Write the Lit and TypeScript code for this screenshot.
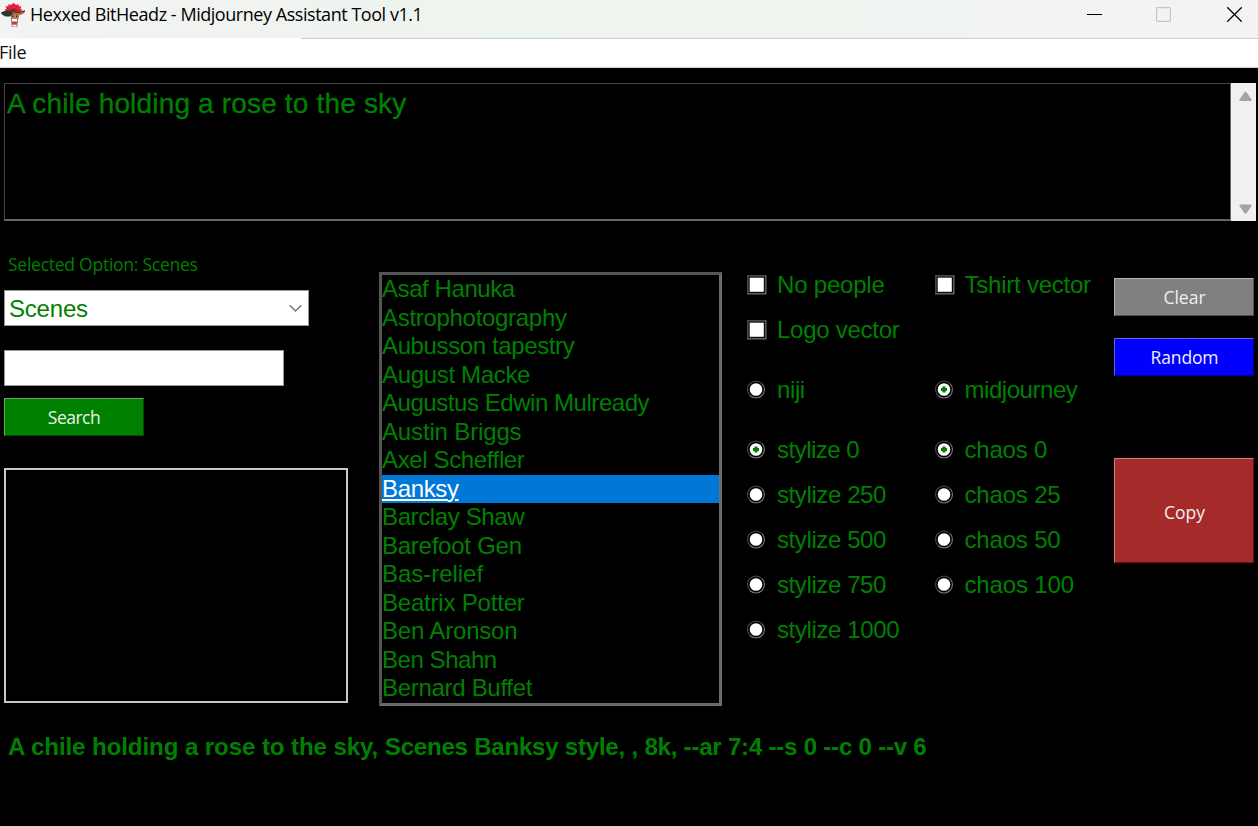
import { LitElement, html, css, svg } from "lit";
import { customElement, property, state } from "lit/decorators.js";
import { classMap } from "lit/directives/class-map.js";

interface Choice {
  text: string;
  col: number;
  row: number;
  on?: boolean;
  spacing: number;
}

const STYLES_LIST: [string, number][] = [
  ["Asaf Hanuka", -0.42],
  ["Astrophotography", -0.3],
  ["Aubusson tapestry", -0.38],
  ["August Macke", -0.33],
  ["Augustus Edwin Mulready", -0.45],
  ["Austin Briggs", -0.15],
  ["Axel Scheffler", -0.37],
  ["Banksy", -0.35],
  ["Barclay Shaw", -0.38],
  ["Barefoot Gen", -0.25],
  ["Bas-relief", -0.03],
  ["Beatrix Potter", -0.2],
  ["Ben Aronson", -0.18],
  ["Ben Shahn", -0.45],
  ["Bernard Buffet", -0.3],
];

const CHECKS: Choice[] = [
  { text: "No people", col: 1, row: 1, spacing: -0.2 },
  { text: "Tshirt vector", col: 2, row: 1, spacing: -0.23 },
  { text: "Logo vector", col: 1, row: 2, spacing: -0.26 },
];

const RADIOS: Choice[] = [
  { text: "niji", col: 1, row: 4, spacing: -0.4 },
  { text: "midjourney", col: 2, row: 4, on: true, spacing: -0.45 },
  { text: "stylize 0", col: 1, row: 6, on: true, spacing: -0.5 },
  { text: "chaos 0", col: 2, row: 6, on: true, spacing: -0.2 },
  { text: "stylize 250", col: 1, row: 7, spacing: -0.4 },
  { text: "chaos 25", col: 2, row: 7, spacing: -0.17 },
  { text: "stylize 500", col: 1, row: 8, spacing: -0.4 },
  { text: "chaos 50", col: 2, row: 8, spacing: -0.17 },
  { text: "stylize 750", col: 1, row: 9, spacing: -0.4 },
  { text: "chaos 100", col: 2, row: 9, spacing: -0.15 },
  { text: "stylize 1000", col: 1, row: 10, spacing: -0.38 },
];

@customElement("choice-mark")
class ChoiceMark extends LitElement {
  @property() kind = "check";
  @property({ type: Boolean }) on = false;

  static styles = css`
    :host { display: block; width: 20px; height: 20px; }
    svg { display: block; }
  `;

  render() {
    if (this.kind === "check") {
      return html`<svg width="20" height="20" viewBox="0 0 20 20">
        <path d="M0 0H19.500V19.500H0z" fill="#6c6c6c" />
        <path d="M0 0H18.500V1.300H1.300V18.500H0z" fill="#484848" />
        <path d="M1.300 1.300H18.200V18.200H1.300z" fill="#1c1c1c" />
        <path d="M2.500 2.500H17.500V17.500H2.500z" fill="#000" />
        <path d="M2.700 2.700H16.800V16.800H2.700z" fill="#fff" />
      </svg>`;
    }
    return html`<svg width="20" height="20" viewBox="0 0 20 20">
      <path d="M3 15.500A8.300 8.300 0 0 1 15 3.600" fill="none" stroke="#404040" stroke-width="1.200" />
      <path d="M3 15.500A8.300 8.300 0 0 0 15 3.600" fill="none" stroke="#747474" stroke-width="1.200" />
      <circle cx="9" cy="9.500" r="6.300" fill="#fff" />
      ${this.on ? svg`<path d="M7.500 6.500h3v1.500h1.500v3h-1.500v1.500h-3v-1.500h-1.500v-3h1.500z" fill="#008000" />` : ""}
    </svg>`;
  }
}

@customElement("app-root")
class AppRoot extends LitElement {
  @state() private selected = "Banksy";

  static styles = css`
    :host {
      display: flex;
      flex-direction: column;
      width: 1258px;
      height: 826px;
      overflow: hidden;
      background: #000;
      color: #008000;
      font-family: "Liberation Sans", Arial, sans-serif;
    }
    * { box-sizing: border-box; }
    .title {
      display: flex;
      align-items: center;
      flex: none;
      height: 38px;
      padding: 0 16px 9px 0;
      background: linear-gradient(90deg, #f2f3f3 0, #f0f3f0 22%, #eef4ee 40%, #f0f4f0 75%, #f3f3f3 90%);
      color: #000;
      font: 18px/26px "Open Sans", "Noto Sans", sans-serif;
      letter-spacing: -0.455px;
      white-space: nowrap;
    }
    .logo { width: 27px; height: 28px; margin-right: 3px; }
    .caption { flex: 1; padding-bottom: 2px; }
    .controls { display: flex; gap: 54px; }
    .controls svg:last-child { margin-left: 2px; }
    .menu {
      flex: none;
      height: 30px;
      background: #fff;
      border-bottom: 1px solid #d0d0d0;
      color: #111;
      font: 18px/29px "Open Sans", "Noto Sans", sans-serif;
      letter-spacing: -0.3px;
      position: relative;
    }
    .menu span { margin-left: -1px; }
    .menu::before {
      content: "";
      position: absolute;
      top: 0;
      left: 301px;
      right: 0;
      height: 1px;
      background: #cfcfcf;
    }
    .prompt {
      display: flex;
      flex: none;
      height: 138px;
      margin: 15px 2px 0 4px;
    }
    .prompt-text {
      flex: 1;
      border: 1px solid #444;
      border-bottom: 2px solid #666;
      border-right-color: #666;
      padding: 4px 2px;
      font-size: 28px;
      line-height: 32px;
      letter-spacing: 0.17px;
      -webkit-text-stroke: 0.3px #008000;
    }
    .scroll {
      display: flex;
      flex-direction: column;
      justify-content: space-between;
      align-items: center;
      width: 25px;
      padding: 8px 0 6px 3px;
      background: #f0f0f0;
    }
    .body {
      display: grid;
      grid-template-columns: 344px 343px 330px 140px;
      column-gap: 31px;
      height: 484px;
      flex: none;
      padding: 0 0 0 4px;
    }
    .left { display: flex; flex-direction: column; align-items: flex-start; }
    .ui { font-family: "Open Sans", "Noto Sans", sans-serif; font-size: 17.5px; }
    .option {
      height: 24px;
      margin: 32px 0 13px 4px;
      line-height: 23px;
      letter-spacing: -0.25px;
      white-space: nowrap;
    }
    .combo {
      display: flex;
      align-items: center;
      justify-content: space-between;
      width: 305px;
      height: 36px;
      padding: 1px 6px 0 4px;
      border: 1px solid #999;
      background: #fff;
      font-size: 24px;
      letter-spacing: -0.2px;
    }
    .entry {
      width: 279.5px;
      height: 36px;
      margin: 24px 0 12px;
      border: 1px solid #999;
      background: #fff;
    }
    .btn {
      display: flex;
      align-items: center;
      justify-content: center;
      width: 140px;
      height: 38px;
      padding: 0 0 1px 1px;
      border-style: solid;
      border-width: 1px;
      color: #f0f0f0;
    }
    .search { padding-left: 0; background: #008000; border-color: #5fae5f #004c00 #004c00 #5fae5f; letter-spacing: -0.5px; }
    .clear { background: #808080; border-color: #b4b4b4 #505050 #505050 #b4b4b4; }
    .random { margin-top: 22px; background: #00f; border-color: #6464e0 #00008c #00008c #6464e0; letter-spacing: -0.15px; }
    .copy { height: 105px; margin-top: 82px; padding: 2px 0 0 1px; background: #a52a2a; border-color: #cf8080 #601010 #601010 #cf8080; }
    .results {
      width: 344px;
      height: 235px;
      margin-top: 32px;
      border: 2px solid #c8c8c8;
    }
    .styles {
      height: 434px;
      margin-top: 51px;
      border: 3px solid #6c6c6c;
      border-left-color: #555;
      border-top-color: #555;
      font-size: 24px;
      line-height: 28.53px;
    }
    .item { height: 28.53px; white-space: nowrap; }
    .selected { background: #0078d7; color: #fff; text-decoration: underline; text-underline-offset: 2px; text-decoration-thickness: 2px; }
    .choices {
      display: grid;
      grid-template-columns: 187.5px 1fr;
      grid-template-rows: 45px 45px 15px 45px 15px repeat(5, 45px);
      margin: 41px 0 0 -6px;
      font-size: 24px;
    }
    .choice {
      display: flex;
      align-items: center;
      gap: 10px;
      white-space: nowrap;
    }
    .r1 { grid-row: 1; } .r2 { grid-row: 2; } .r4 { grid-row: 4; }
    .r6 { grid-row: 6; } .r7 { grid-row: 7; } .r8 { grid-row: 8; }
    .r9 { grid-row: 9; } .r10 { grid-row: 10; }
    .c1 { grid-column: 1; } .c2 { grid-column: 2; }
    .actions { display: flex; flex-direction: column; padding-top: 57px; }
    .output {
      margin: 28px 0 0 8px;
      font-size: 24px;
      line-height: 28px;
      font-weight: bold;
      letter-spacing: -0.2px;
      white-space: nowrap;
    }
    .subject { letter-spacing: -0.055px; }
    svg { display: block; }
  `;

  private choice(kind: string, c: Choice) {
    return html`<div class=${classMap({ choice: true, [`c${c.col}`]: true, [`r${c.row}`]: true })}>
      <choice-mark kind=${kind} ?on=${!!c.on}></choice-mark><span style="letter-spacing:${c.spacing}px">${c.text}</span>
    </div>`;
  }

  render() {
    return html`
      <div class="title">
        <svg class="logo" viewBox="0 0 27 28">
          <path d="M7 11 4.500 8.500 6.500 8 5.500 5 8.300 5.500 8.500 3 11 4 13.500 1.800 16 4 18.500 3 18.700 5.500 21.300 5 20.500 8 22.500 8.500 20 11z" fill="#e2203a" />
          <path d="M10 10 10.500 8 12 8.500 13.500 7 15 8.500 16.500 8 17 10z" fill="#7e2434" />
          <path d="M10.500 12H19V17L17.500 19H11z" fill="#c08552" />
          <path d="M1 11.500Q4 9.500 8.500 9.500L13 10.500 12.500 13.500 10 15.500 5.500 15.500 2 13.500z" fill="#2a3630" />
          <path d="M12.500 11 19 11 24.500 9.800 24.500 12 20 14.300 13 14z" fill="#b0713c" />
          <path d="M13 10.300 19 10.700 25 9.300 25 10.400 19 12 13 11.500z" fill="#453326" />
          <path d="M12 14.500h1.500v1.500h-1.500zM16 14.500h1.500v1.500h-1.500z" fill="#39291f" />
          <path d="M10.800 17.500H18.200L17.300 26H11.700z" fill="#80787a" />
          <path d="M12 18H17V20.500H12zM12.500 23.500H16.500V25.500H12.500z" fill="#fff" />
          <path d="M12.300 20.700H16.700L16.300 23.500H12.700z" fill="#ee2636" />
        </svg>
        <span class="caption">Hexxed BitHeadz - Midjourney Assistant Tool v1.1</span>
        <div class="controls">
          <svg width="15" height="15"><path d="M0 7.500H15" stroke="#000" /></svg>
          <svg width="15" height="15"><rect x=".6" y=".6" width="13.800" height="13.800" rx="1" fill="none" stroke="#c4c4c4" stroke-width="1.200" /></svg>
          <svg width="15" height="15"><path d="M.3.3 14.700 14.700M14.700.3.3 14.700" stroke="#000" stroke-width="1.300" /></svg>
        </div>
      </div>
      <div class="menu"><span>File</span></div>
      <div class="prompt">
        <div class="prompt-text">A chile holding a rose to the sky</div>
        <div class="scroll">
          <svg width="13" height="11"><path d="M5.300 1.500Q6.500 0 7.700 1.500L12.500 8.500Q13 10 11.500 10H1.500Q0 10 .5 8.500z" fill="#a3a3a3" /></svg>
          <svg width="13" height="11"><path d="M5.300 9Q6.500 10.500 7.700 9L12.500 2Q13 .5 11.500 .5H1.500Q0 .5 .5 2z" fill="#a3a3a3" /></svg>
        </div>
      </div>
      <div class="body">
        <div class="left">
          <div class="option ui"><span>Selected Option: Scenes</span></div>
          <div class="combo"><span>Scenes</span>
            <svg width="13" height="9"><path d="M.7 1.200 6.500 7 12.300 1.200" fill="none" stroke="#777" stroke-width="1.500" /></svg>
          </div>
          <div class="entry"></div>
          <div class="btn search ui">Search</div>
          <div class="results"></div>
        </div>
        <div class="styles">
          ${STYLES_LIST.map(
            ([name, spacing]) => html`<div
              class=${classMap({ item: true, selected: name === this.selected })}
              @click=${() => (this.selected = name)}
            ><span style="letter-spacing:${spacing}px">${name}</span></div>`
          )}
        </div>
        <div class="choices">
          ${CHECKS.map((c) => this.choice("check", c))}
          ${RADIOS.map((c) => this.choice("radio", c))}
        </div>
        <div class="actions">
          <div class="btn clear ui">Clear</div>
          <div class="btn random ui">Random</div>
          <div class="btn copy ui">Copy</div>
        </div>
      </div>
      <div class="output"><span class="subject">A chile holding a rose to the sky, </span>Scenes Banksy style, , 8k, --ar 7:4 --s 0 --c 0 --v 6</div>
    `;
  }
}
